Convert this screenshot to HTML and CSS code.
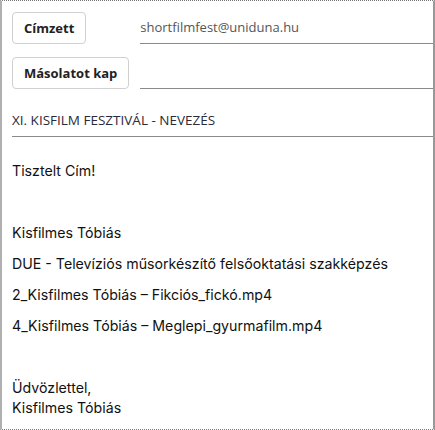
FILE: index.html
```html
<!DOCTYPE html>
<html>
<head>
<meta charset="utf-8">
<link rel="stylesheet" href="styles.css">
</head>
<body>
<div class="mail">
  <div class="header">
    <button class="btn">Címzett</button>
    <div class="field">shortfilmfest@uniduna.hu</div>
    <button class="btn">Másolatot kap</button>
    <div class="field"></div>
  </div>
  <div class="subject">XI. KISFILM FESZTIVÁL - NEVEZÉS</div>
  <div class="body">
    <p>Tisztelt Cím!</p>
    <p>&nbsp;</p>
    <p>Kisfilmes Tóbiás</p>
    <p>DUE - Televíziós műsorkészítő felsőoktatási szakképzés</p>
    <p>2_Kisfilmes Tóbiás – Fikciós_fickó.mp4</p>
    <p>4_Kisfilmes Tóbiás – Meglepi_gyurmafilm.mp4</p>
    <p>&nbsp;</p>
    <p>Üdvözlettel,<br>Kisfilmes Tóbiás</p>
  </div>
</div>
</body>
</html>
```

FILE: styles.css
```css
html, body {
  margin: 0;
  padding: 0;
  background: #fff;
}
.mail {
  box-sizing: border-box;
  width: 435px;
  height: 430px;
  border-top: 1px dotted #777;
  border-bottom: 1px dotted #777;
  border-left: 2px solid #b0b0b0;
  border-right: 2px solid #999;
  padding: 11px 0 0 10px;
  overflow: hidden;
}
.header {
  display: grid;
  grid-template-columns: auto 1fr;
  column-gap: 11px;
  row-gap: 13px;
  justify-items: start;
}
.btn {
  box-sizing: border-box;
  height: 32px;
  padding: 0 11px;
  border: 1px solid #d0d0d0;
  border-radius: 4px;
  background: #fff;
  font-family: "Open Sans", "Noto Sans", sans-serif;
  font-weight: 700;
  font-size: 13px;
  color: #222;
  margin: 0;
}
.field {
  justify-self: stretch;
  border-bottom: 1px solid #8a8a8a;
  font-family: "Open Sans", "Noto Sans", sans-serif;
  font-size: 13px;
  color: #555;
  padding-top: 6px;
  box-sizing: border-box;
}
.subject {
  margin-top: 22px;
  padding-bottom: 7px;
  border-bottom: 1px solid #8a8a8a;
  font-family: "Open Sans", "Noto Sans", sans-serif;
  font-size: 13.5px;
  color: #2a2a3a;
}
.body {
  padding-top: 24px;
  font-family: "Inter", "Liberation Sans", sans-serif;
  font-size: 14.2px;
  color: #111;
}
.body p {
  margin: 0 0 11px 0;
  line-height: 20px;
}
```
